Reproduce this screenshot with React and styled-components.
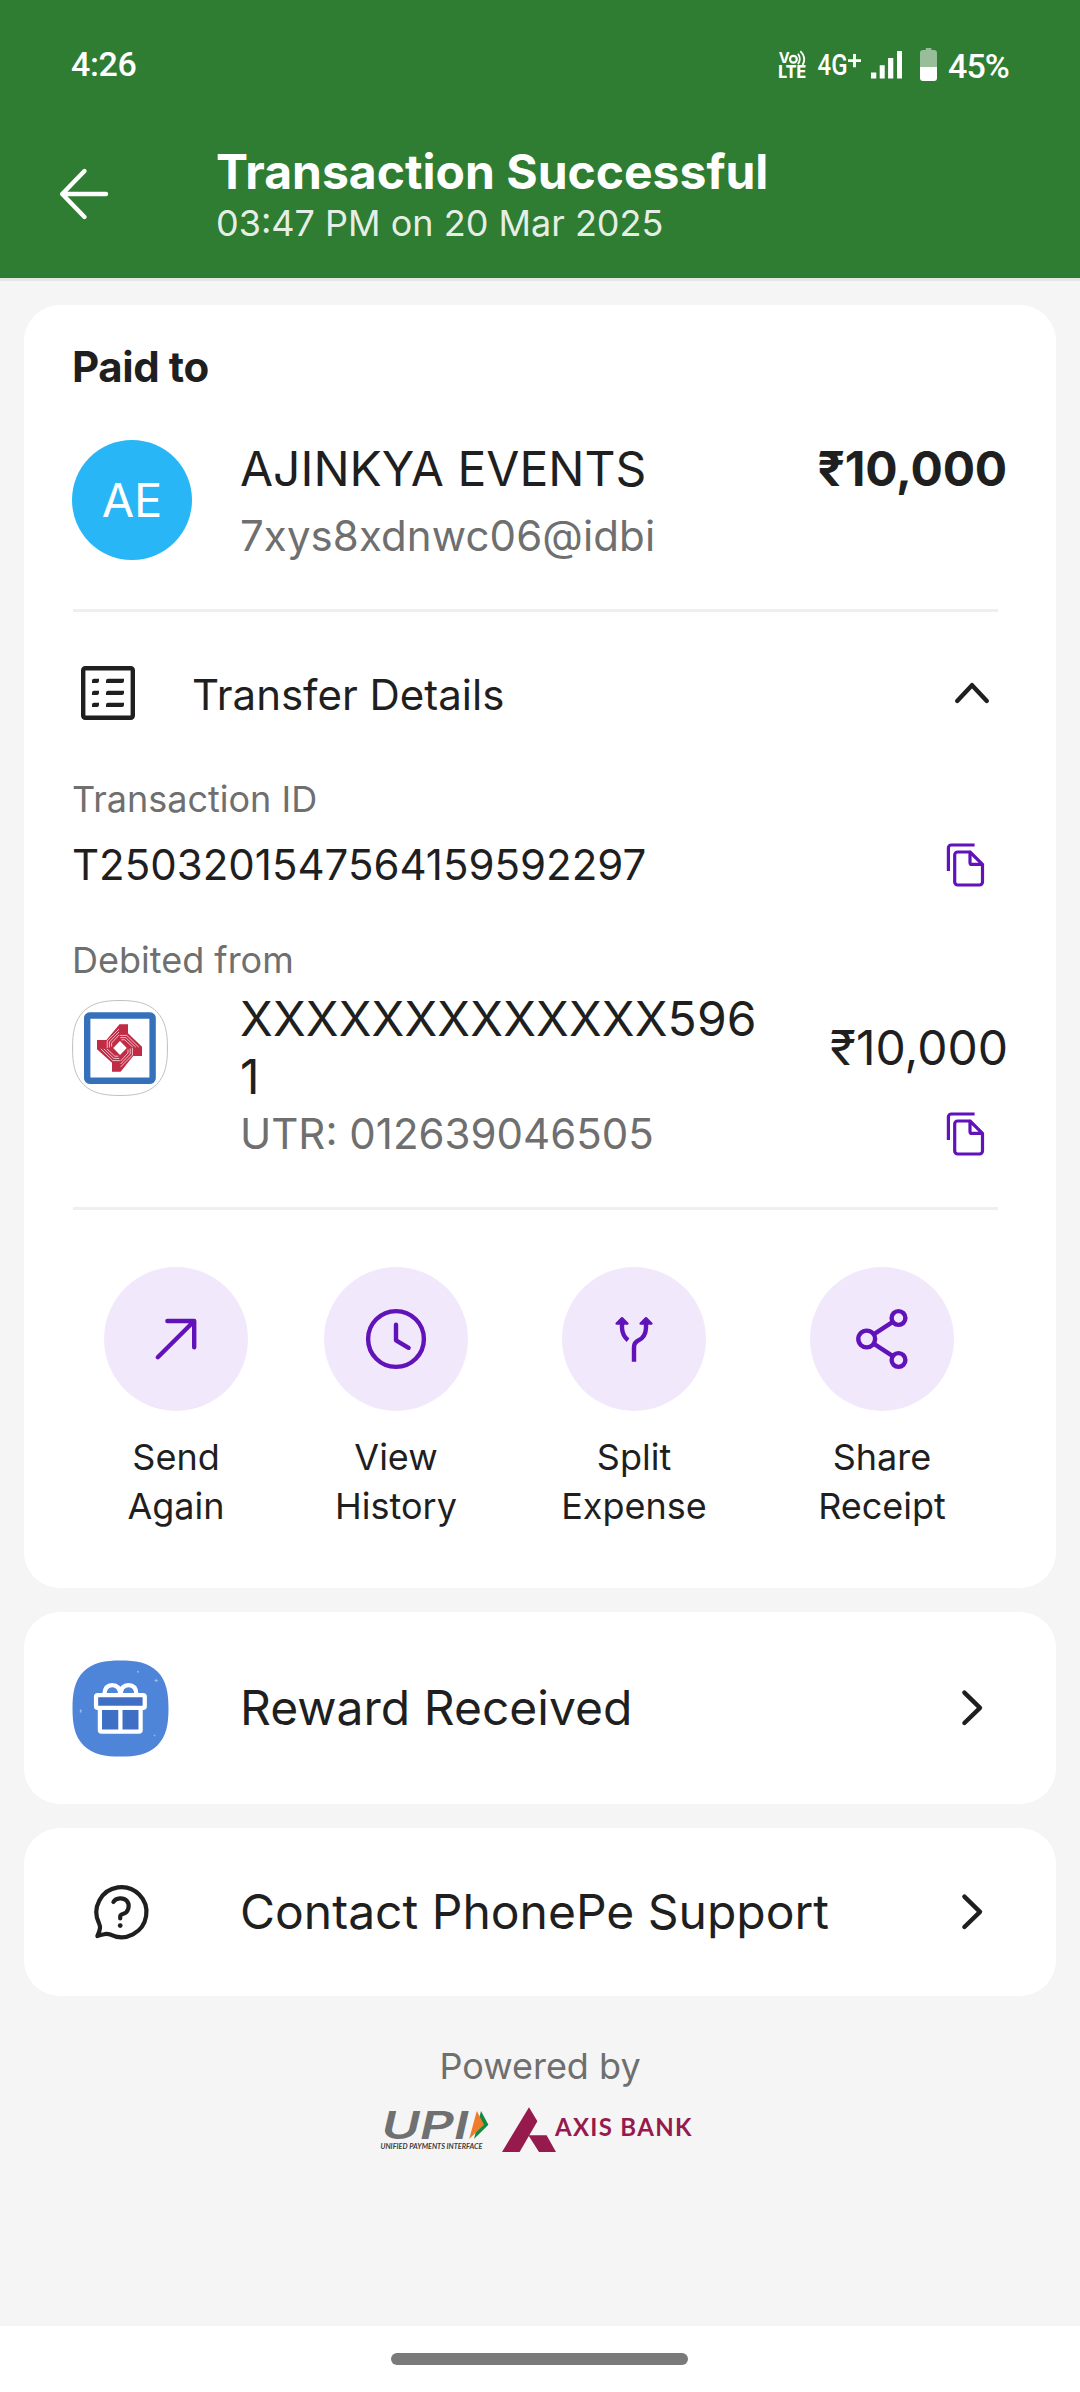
import React from "react";
import styled, { createGlobalStyle } from "styled-components";

const color = {
  green: "#2f7d32",
  page: "#f5f5f5",
  ink: "#1f1f1f",
  muted: "#6f6f6f",
  line: "#efefef",
  purple: "#6112b8",
  lilac: "#f2e8fc",
  upi: "#6f7072",
  axis: "#971a4d",
};

const GlobalStyle = createGlobalStyle`
  * { box-sizing: border-box; }
  body {
    margin: 0;
    background: ${color.page};
    color: ${color.ink};
    font-family: Inter, "Noto Sans", sans-serif;
  }
  svg { display: block; flex: none; overflow: visible; }
`;

/* ---------- layout ---------- */

const Screen = styled.div`
  width: 1080px;
  height: 2392px;
  display: flex;
  flex-direction: column;
  background: ${color.page};
`;

const Header = styled.header`
  background: ${color.green};
  color: #fff;
  border-bottom: 3px solid #e6e6e6;
`;

const StatusBar = styled.div`
  height: 110px;
  padding: 18px 71px 0 71px;
  display: flex;
  align-items: center;
  justify-content: space-between;
  font-family: Roboto, sans-serif;
  font-weight: 500;
  font-size: 34px;
  line-height: 40px;
`;

const Clock = styled.span`
  letter-spacing: -0.4px;
`;

const StatusIcons = styled.div`
  display: flex;
  align-items: center;
  height: 33px;
`;

const IconSlot = styled.span`
  margin-right: ${(p) => p.$gap}px;
`;

const Battery = styled.span`
  letter-spacing: -0.9px;
  padding-top: 3px;
  width: 61px;
  white-space: nowrap;
`;

const AppBar = styled.div`
  height: 168px;
  padding-left: 60px;
  display: flex;
  align-items: center;
  gap: 108px;
`;

const Title = styled.h1`
  margin: 0;
  font-size: 48px;
  line-height: 58px;
  font-weight: 700;
`;

const Subtitle = styled.div`
  font-size: 36px;
  line-height: 44px;
  color: rgba(255, 255, 255, 0.9);
`;

const Content = styled.main`
  flex: 1;
  padding: 24px 24px 0;
  display: flex;
  flex-direction: column;
  gap: 24px;
`;

const Card = styled.section`
  background: #fff;
  border-radius: 36px;
  padding: 0 48px;
`;

const ReceiptCard = styled(Card)`
  padding-top: 36px;
  padding-bottom: 57px;
`;

const LinkCard = styled(Card)`
  height: ${(p) => p.$height}px;
  display: flex;
  align-items: center;
`;

const Heading = styled.h2`
  margin: 0 0 48px;
  font-size: 42px;
  line-height: 51px;
  font-weight: 700;
  letter-spacing: -0.4px;
`;

const Row = styled.div`
  display: flex;
  align-items: ${(p) => p.$align || "center"};
`;

const Avatar = styled.div`
  width: 120px;
  height: 120px;
  padding-bottom: 2px;
  border-radius: 50%;
  background: #29b6f6;
  color: #fff;
  font-size: 47px;
  line-height: 57px;
  display: flex;
  align-items: center;
  justify-content: center;
`;

const Payee = styled.div`
  flex: 1;
  margin-left: 48px;
`;

const Primary = styled.div`
  font-size: 48px;
  line-height: 58px;
  word-break: break-all;
`;

const Secondary = styled.div`
  font-size: 42px;
  line-height: 51px;
  color: ${color.muted};
`;

const PayeeHandle = styled(Secondary)`
  margin-top: 12px;
  letter-spacing: 0.1px;
`;

const Amount = styled.div`
  font-size: 48px;
  line-height: 58px;
  font-weight: ${(p) => (p.$bold ? 700 : 400)};
  margin-right: ${(p) => (p.$bold ? 1 : 0)}px;
  letter-spacing: ${(p) => (p.$bold ? "-0.2px" : "0")};
`;

const Divider = styled.hr`
  height: 3px;
  border: 0;
  margin: 48px 10px 0 1px;
  background: ${color.line};
`;

const DetailsToggle = styled(Row)`
  margin-top: 45px;
  height: 72px;
`;

const ListIconSlot = styled.div`
  width: 72px;
  display: flex;
  justify-content: center;
`;

const ToggleLabel = styled.div`
  flex: 1;
  margin: 3px 0 0 48px;
  font-size: 42px;
  line-height: 51px;
`;

const FieldLabel = styled.div`
  margin-top: ${(p) => p.$top}px;
  font-size: 36px;
  line-height: 44px;
  color: ${color.muted};
`;

const FieldRow = styled(Row)`
  margin-top: 18px;
  height: 51px;
  justify-content: space-between;
  font-size: 42px;
  line-height: 51px;
`;

const CopyButton = styled.button`
  border: 0;
  padding: 0;
  background: none;
  margin-right: 18px;
`;

const AccountRow = styled(Row)`
  margin-top: 8px;
`;

const AccountNumber = styled(Primary)`
  width: 528px;
  margin: 0 auto 0 72px;
  letter-spacing: 0.15px;
`;

const UtrRow = styled(Row)`
  margin: 2px 0 0 168px;
  height: 51px;
  justify-content: space-between;
`;

const Actions = styled.nav`
  display: grid;
  grid-template-columns: 220px 220px 256px 240px;
  margin: 57px -6px 0;
`;

const Action = styled.div`
  display: flex;
  flex-direction: column;
  align-items: center;
  gap: 22px;
  font-size: 36px;
  line-height: 49px;
  text-align: center;
`;

const ActionCircle = styled.div`
  width: 144px;
  height: 144px;
  border-radius: 50%;
  background: ${color.lilac};
`;

const LinkLabel = styled.div`
  flex: 1;
  font-size: 48px;
  line-height: 58px;
`;

const LinkIcon = styled.div`
  width: 97px;
  margin-right: 71px;
  display: flex;
  justify-content: center;
`;

const Footer = styled.footer`
  margin-top: 24px;
  display: flex;
  flex-direction: column;
  align-items: center;
  font-size: 36px;
  line-height: 44px;
  color: ${color.muted};
`;

const Logos = styled.div`
  margin: 19px 6px 0 0;
  display: flex;
  align-items: flex-start;
`;

const AxisLogo = styled.div`
  display: flex;
  margin-left: 13px;
`;

const AxisName = styled.span`
  margin: 4px 0 0 -1px;
  font-family: Lato, sans-serif;
  font-weight: 700;
  font-size: 24px;
  line-height: 32px;
  letter-spacing: 1.3px;
  width: 139px;
  white-space: nowrap;
  color: ${color.axis};
`;

const NavBar = styled.div`
  height: 66px;
  padding: 27px 2px 0 0;
  background: #fff;
  display: flex;
  justify-content: center;
`;

const NavPill = styled.div`
  width: 297px;
  height: 12px;
  border-radius: 6px;
  background: #7a7a7a;
`;

/* ---------- icons ---------- */

const VolteIcon = () => (
  <svg width="27" height="33" fill="#fff" fontFamily="Inter, sans-serif">
    <text x="-0.3" y="15.4" fontSize="14.8" fontWeight="700" textLength="11" lengthAdjust="spacingAndGlyphs">V</text>
    <circle cx="14.4" cy="11.2" r="3.4" fill="none" stroke="#fff" strokeWidth="2.2" />
    <path d="M19 5.8Q22.6 11 19 16.2M21.4 3.2Q27.8 9.8 23.6 17" fill="none" stroke="#fff" strokeWidth="1.8" />
    <text x="-0.8" y="30.3" fontSize="16.8" fontWeight="800" textLength="27.8" lengthAdjust="spacingAndGlyphs">LTE</text>
  </svg>
);

const NetworkIcon = () => (
  <svg width="43" height="33" fill="#fff">
    <text x="-0.5" y="26.7" fontSize="28.7" fontWeight="500" fontFamily="Roboto, sans-serif" textLength="30" lengthAdjust="spacingAndGlyphs">4G</text>
    <path d="M30 11.2h13v2.9h-13zM35 6h3v13.2h-3z" />
  </svg>
);

const SignalIcon = () => (
  <svg width="31" height="33" fill="#fff">
    <path d="M0 24.5h5.3v5.9H0zM8.7 17.2h5v13.2h-5zM17.1 10h5.2v20.4h-5.2zM26 3h5v27.4h-5z" />
  </svg>
);

const BatteryIcon = () => (
  <svg width="17" height="33" fill="#fff">
    <path fillOpacity="0.5" d="M5.8 0h5.6v2H14a3 3 0 0 1 3 3v14H0V5a3 3 0 0 1 3-3h2.8z" />
    <path d="M0 19h17v11a3 3 0 0 1-3 3H3a3 3 0 0 1-3-3z" />
  </svg>
);

const BackIcon = () => (
  <svg width="48" height="52" fill="none" stroke="#fff" strokeWidth="4.4" strokeLinecap="round" strokeLinejoin="round">
    <path d="M2.2 26H46M24.5 3L2.2 26L24.5 49" />
  </svg>
);

const ListIcon = () => (
  <svg width="54" height="54" fill={color.ink}>
    <rect x="2.2" y="2.2" width="49.6" height="49.6" rx="2" fill="none" stroke={color.ink} strokeWidth="4.4" />
    {[12.7, 24.7, 36.7].map((y) => (
      <path
        key={y}
        d={`M13 ${y}h5v2.4a2 2 0 0 1-2 2h-5v-2.4a2 2 0 0 1 2-2zM27.3 ${y}H43v2.4a2 2 0 0 1-2 2H25v-2.2a2.2 2.2 0 0 1 2.3-2.2z`}
      />
    ))}
  </svg>
);

const Chevron = ({ up }) => (
  <svg width="72" height="72" fill="none" stroke={color.ink} strokeWidth="4.4" strokeLinecap="round" strokeLinejoin="round">
    <path d={up ? "M21.2 44L36 28.2L50.8 44" : "M28.4 20.6L44 35.8L28.4 51"} />
  </svg>
);

const CopyIcon = () => (
  <svg width="48" height="48" fill="none" stroke={color.purple} strokeWidth="3.2" strokeLinejoin="round">
    <path d="M32.6 4H9.4a3 3 0 0 0-3 3v23" />
    <path d="M28 11H15.7a3 3 0 0 0-3 3v27a3 3 0 0 0 3 3h21.8a3 3 0 0 0 3-3V23.4L28 11v10.4a2 2 0 0 0 2 2h10.5" />
  </svg>
);

const SQUIRCLE =
  "M48 .5C63 .5 75.5 2.4 84.5 11.5C93.6 20.5 95.5 33 95.5 48C95.5 63 93.6 75.5 84.5 84.5C75.5 93.6 63 95.5 48 95.5C33 95.5 20.5 93.6 11.5 84.5C2.4 75.5 .5 63 .5 48C.5 33 2.4 20.5 11.5 11.5C20.5 2.4 33 .5 48 .5Z";

const BankIcon = () => (
  <svg width="96" height="96">
    <path d={SQUIRCLE} fill="#fff" stroke="#c2c2c2" strokeWidth="1" />
    <rect x="15.2" y="15.5" width="65.4" height="65.2" rx="2.5" fill="#fff" stroke="#3570bb" strokeWidth="6.4" />
    <path
      fill="#c12b45"
      d="M47.5 24.3H56V33.2L70 46.7V56H61.2L48.6 71.7H40V62.8L25 49.2V40H34.4Z"
    />
    <path fill="#fff" d="M48 41L54.8 48L48 55L41.2 48Z" />
    <g fill="none" stroke="#fff" strokeWidth="0.7">
      {[0, 90, 180, 270].map((a) => (
        <path
          key={a}
          transform={`translate(47.8 48) rotate(${a})`}
          d="M-.8 -19L-12.6 -7V0M-.8 -16L-10.4 -6V-.5M-.8 -13L-8.2 -5V-1.5"
        />
      ))}
    </g>
  </svg>
);

const GiftIcon = () => (
  <svg width="97" height="97" viewBox="0 0 96 96">
    <path d={SQUIRCLE} fill="#4f85d9" />
    <g fill="#3e6fc4" stroke="#fff" strokeWidth="4.2" strokeLinejoin="round">
      <path fill="none" d="M32 35V34Q32.6 24.9 39.8 24.9T48 34Q48.6 24.9 56 24.9T63.8 34V35" />
      <rect x="27.6" y="46" width="40.3" height="24.8" rx="1.6" />
      <path fill="none" d="M47.9 47V70" />
      <rect x="23.8" y="34.8" width="48.2" height="12.6" rx="1.6" />
    </g>
    <g fill="#9dbcec">
      <path d="M82.8 18.5h1v1.2h1.2v1h-1.2v1.2h-1v-1.2h-1.2v-1h1.2z" />
      <rect x="64.4" y="10.8" width="1.6" height="1.6" />
      <rect x="7.8" y="49" width="1.6" height="3" />
      <rect x="81" y="74" width="1.4" height="1.4" />
    </g>
  </svg>
);

const SupportIcon = () => (
  <svg width="54" height="54" fill="none" stroke={color.ink} strokeWidth="4.2" strokeLinecap="round" strokeLinejoin="round">
    <path d="M3.4 51Q5.6 46.5 6 43Q6.2 41 4.9 38A25 25 0 1 1 16.4 49.6Q13 48.4 10 49.2Q6.5 50 3.4 51Z" />
    <path d="M19.4 17C22 12.6 29.4 12.3 32.8 15.8C36.4 20 34.6 27.6 28.8 29Q26.2 29.6 26.2 31.8V33.4" />
    <circle cx="26.2" cy="40.6" r="2.4" fill={color.ink} stroke="none" />
  </svg>
);

const glyphs = {
  send: <path d="M53.8 90.2L90.2 54M63.4 54H90.2V80.2" />,
  history: (
    <>
      <circle cx="72" cy="72" r="27.9" />
      <path d="M72 57.8V73.3L84.6 80.8" />
    </>
  ),
  split: (
    <>
      <path strokeLinecap="butt" d="M60 56V61Q60.4 68.6 66 73.2M84 56V61Q83.6 69.8 77 73Q72 75.4 72 80V94.8" />
      <path fill={color.purple} strokeWidth="2.4" d="M60 51.2L65.4 56.6H54.6ZM84 51.2L89.4 56.6H78.6Z" />
    </>
  ),
  share: (
    <>
      <circle cx="56.7" cy="72" r="8.4" />
      <circle cx="88.5" cy="51" r="6.9" />
      <circle cx="88.5" cy="93" r="6.9" />
      <path strokeLinecap="butt" d="M63.6 67.4L82.8 54.8M63.6 76.6L82.8 89.2" />
    </>
  ),
};

const ActionGlyph = ({ name }) => (
  <svg width="144" height="144" fill="none" stroke={color.purple} strokeWidth="4.4" strokeLinecap="round" strokeLinejoin="round">
    {glyphs[name]}
  </svg>
);

const UpiLogo = () => (
  <svg width="109" height="45" fill={color.upi} fontStyle="italic">
    <text x="1.5" y="31.8" fontSize="38.8" fontWeight="600" fontFamily="Inter, sans-serif" textLength="87" lengthAdjust="spacingAndGlyphs">UPI</text>
    <path fill="#128a45" d="M101 4L108.4 17.8L94 32Z" />
    <path fill="#f07c2b" d="M96.8 4L104 17.8L89.2 32Z" />
    <text x="0.4" y="41.7" fontSize="7.2" fontWeight="700" fontFamily="Lato, sans-serif" fill="#3c3c3e" textLength="102" lengthAdjust="spacingAndGlyphs">UNIFIED PAYMENTS INTERFACE</text>
  </svg>
);

const AxisMark = () => (
  <svg width="54" height="45" fill={color.axis}>
    <path d="M27 .3L35.4 14.3L17.6 45H0ZM26.4 28.2H44.6L54 45H37Z" />
  </svg>
);

/* ---------- page ---------- */

const actions = [
  { icon: "send", top: "Send", bottom: "Again" },
  { icon: "history", top: "View", bottom: "History" },
  { icon: "split", top: "Split", bottom: "Expense" },
  { icon: "share", top: "Share", bottom: "Receipt" },
];

export default function App() {
  return (
    <Screen>
      <GlobalStyle />
      <Header>
        <StatusBar>
          <Clock>4:26</Clock>
          <StatusIcons>
            <IconSlot $gap={12}><VolteIcon /></IconSlot>
            <IconSlot $gap={10}><NetworkIcon /></IconSlot>
            <IconSlot $gap={18}><SignalIcon /></IconSlot>
            <IconSlot $gap={11}><BatteryIcon /></IconSlot>
            <Battery>45%</Battery>
          </StatusIcons>
        </StatusBar>
        <AppBar>
          <BackIcon />
          <div>
            <Title>Transaction Successful</Title>
            <Subtitle>03:47 PM on 20 Mar 2025</Subtitle>
          </div>
        </AppBar>
      </Header>

      <Content>
        <ReceiptCard>
          <Heading>Paid to</Heading>
          <Row $align="flex-start">
            <Avatar>AE</Avatar>
            <Payee>
              <Primary>AJINKYA EVENTS</Primary>
              <PayeeHandle>7xys8xdnwc06@idbi</PayeeHandle>
            </Payee>
            <Amount $bold>₹10,000</Amount>
          </Row>
          <Divider />

          <DetailsToggle>
            <ListIconSlot><ListIcon /></ListIconSlot>
            <ToggleLabel>Transfer Details</ToggleLabel>
            <Chevron up />
          </DetailsToggle>

          <FieldLabel $top={48}>Transaction ID</FieldLabel>
          <FieldRow>
            <span>T2503201547564159592297</span>
            <CopyButton><CopyIcon /></CopyButton>
          </FieldRow>

          <FieldLabel $top={48}>Debited from</FieldLabel>
          <AccountRow>
            <BankIcon />
            <AccountNumber>XXXXXXXXXXXXX5961</AccountNumber>
            <Amount>₹10,000</Amount>
          </AccountRow>
          <UtrRow>
            <Secondary>UTR: 012639046505</Secondary>
            <CopyButton><CopyIcon /></CopyButton>
          </UtrRow>
          <Divider />

          <Actions>
            {actions.map((a) => (
              <Action key={a.icon}>
                <ActionCircle><ActionGlyph name={a.icon} /></ActionCircle>
                <div>
                  {a.top}
                  <br />
                  {a.bottom}
                </div>
              </Action>
            ))}
          </Actions>
        </ReceiptCard>

        <LinkCard $height={192}>
          <LinkIcon><GiftIcon /></LinkIcon>
          <LinkLabel>Reward Received</LinkLabel>
          <Chevron />
        </LinkCard>

        <LinkCard $height={168}>
          <LinkIcon><SupportIcon /></LinkIcon>
          <LinkLabel>Contact PhonePe Support</LinkLabel>
          <Chevron />
        </LinkCard>

        <Footer>
          Powered by
          <Logos>
            <UpiLogo />
            <AxisLogo>
              <AxisMark />
              <AxisName>AXIS BANK</AxisName>
            </AxisLogo>
          </Logos>
        </Footer>
      </Content>

      <NavBar>
        <NavPill />
      </NavBar>
    </Screen>
  );
}
